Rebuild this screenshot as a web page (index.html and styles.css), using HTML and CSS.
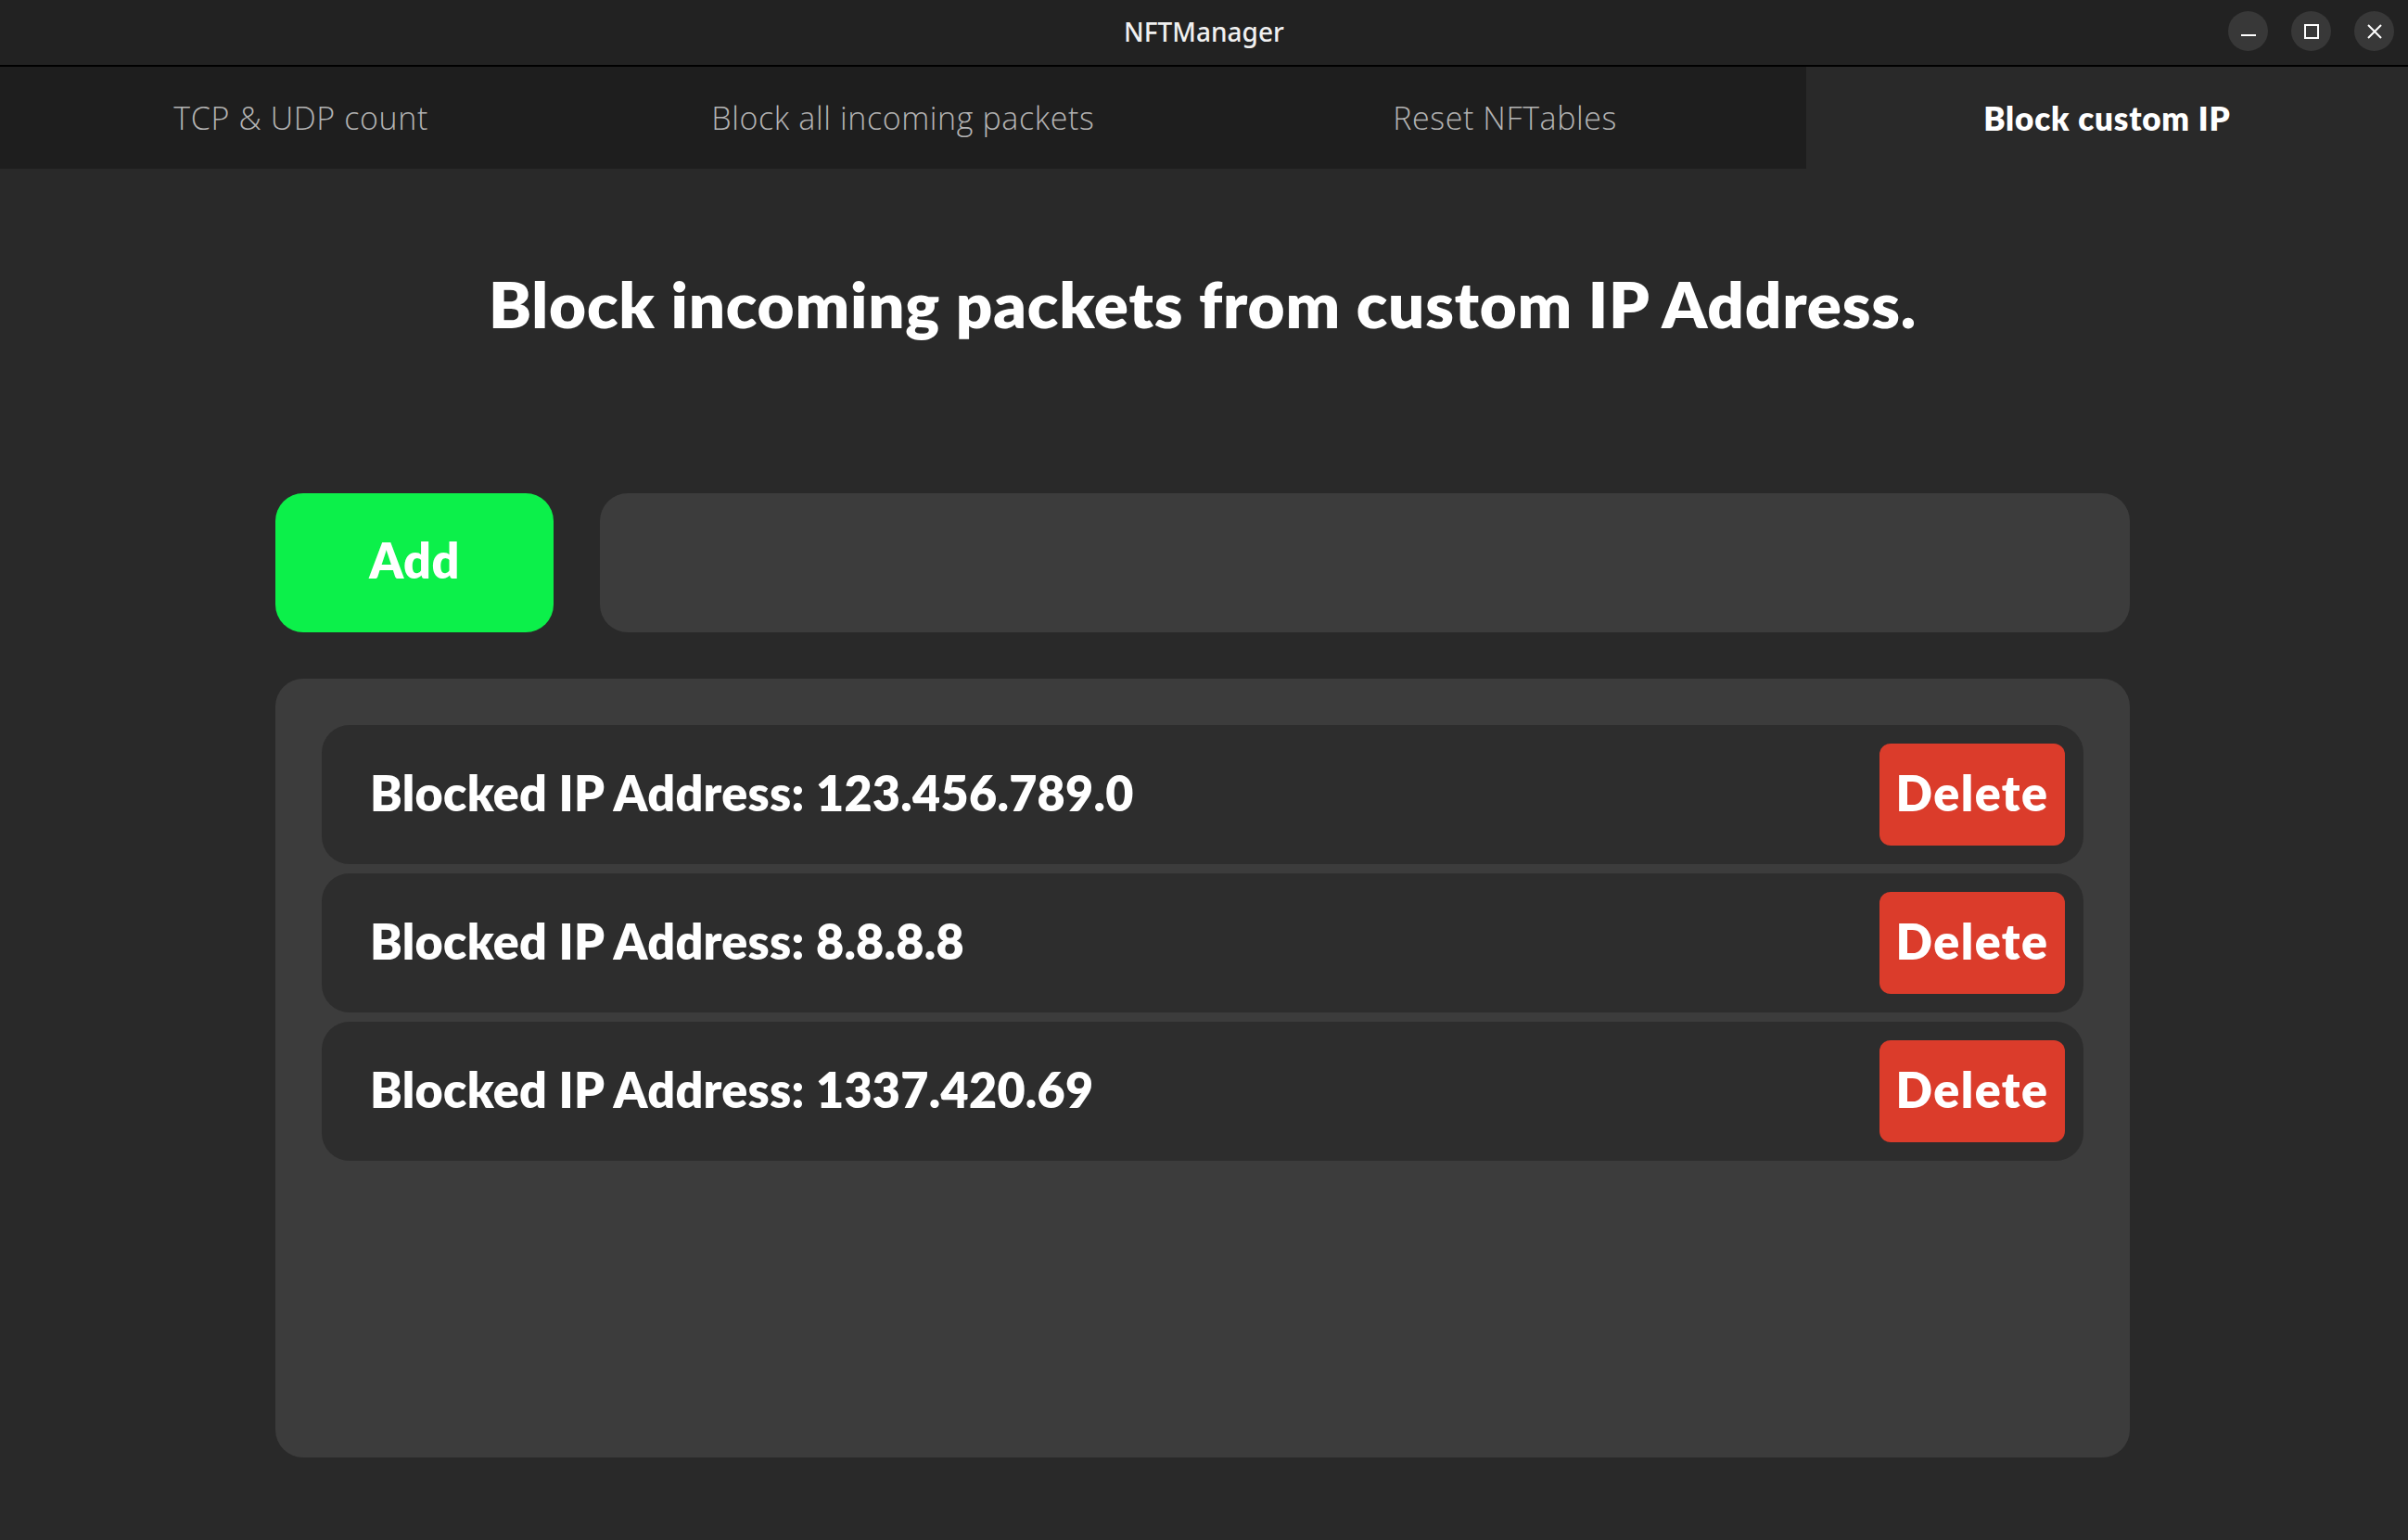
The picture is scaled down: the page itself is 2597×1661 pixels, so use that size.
FILE: index.html
```html
<!DOCTYPE html>
<html lang="en">
<head>
<meta charset="utf-8">
<title>NFTManager</title>
<link rel="stylesheet" href="styles.css">
</head>
<body>
<div class="window">
  <header class="titlebar">
    <div class="app-title">NFTManager</div>
    <div class="win-controls">
      <button class="win-btn" aria-label="Minimize">
        <svg width="18" height="18" viewBox="0 0 18 18"><rect x="1" y="12" width="16" height="2" fill="#fff"/></svg>
      </button>
      <button class="win-btn" aria-label="Maximize">
        <svg width="18" height="18" viewBox="0 0 18 18"><rect x="2" y="2" width="14" height="14" fill="none" stroke="#fff" stroke-width="2"/></svg>
      </button>
      <button class="win-btn" aria-label="Close">
        <svg width="18" height="18" viewBox="0 0 18 18"><path d="M2 2 L16 16 M16 2 L2 16" stroke="#fff" stroke-width="2"/></svg>
      </button>
    </div>
  </header>
  <nav class="tabs">
    <div class="tab">TCP &amp; UDP count</div>
    <div class="tab">Block all incoming packets</div>
    <div class="tab">Reset NFTables</div>
    <div class="tab tab-active">Block custom IP</div>
  </nav>
  <main class="content">
    <h1 class="heading">Block incoming packets from custom IP Address.</h1>
    <div class="add-row">
      <button class="add-btn">Add</button>
      <div class="ip-input"></div>
    </div>
    <section class="panel">
      <div class="ip-row"><span class="ip-text">Blocked IP Address: 123.456.789.0</span><button class="del-btn">Delete</button></div>
      <div class="ip-row"><span class="ip-text">Blocked IP Address: 8.8.8.8</span><button class="del-btn">Delete</button></div>
      <div class="ip-row"><span class="ip-text">Blocked IP Address: 1337.420.69</span><button class="del-btn">Delete</button></div>
    </section>
  </main>
</div>
</body>
</html>
```

FILE: styles.css
```css
* { box-sizing: border-box; }
html, body { margin: 0; padding: 0; background: #222222; }
body { font-family: Lato, "Open Sans", sans-serif; color: #fff; }

.window { display: flex; flex-direction: column; height: 100vh; }

.titlebar {
  height: 72px;
  flex: 0 0 72px;
  background: #222222;
  border-bottom: 2px solid #000;
  display: flex;
  align-items: center;
  justify-content: center;
  position: relative;
}
.app-title {
  font-family: "Noto Sans", sans-serif;
  font-size: 28px;
  font-weight: 500;
  color: #f0f0f0;
  padding-bottom: 2px;
}
.win-controls {
  position: absolute;
  right: 15px;
  top: 12px;
  display: flex;
  gap: 25px;
}
.win-btn {
  width: 43px; height: 43px;
  border-radius: 50%;
  border: 0;
  background: #383838;
  display: flex; align-items: center; justify-content: center;
  padding: 0;
}

.tabs {
  height: 110px;
  flex: 0 0 110px;
  display: grid;
  grid-template-columns: repeat(4, 1fr);
  background: #1e1e1e;
}
.tab {
  display: flex; align-items: center; justify-content: center;
  font-family: "Open Sans", sans-serif;
  font-size: 34px; font-weight: 300; color: #b4b4b4;
  letter-spacing: 0.6px;
}
.tab-active {
  background: #292929; color: #fff;
  font-family: Lato, sans-serif;
  font-weight: 800; font-size: 35px; letter-spacing: 0.8px;
}

.content {
  flex: 1;
  background: #292929;
  display: flex;
  flex-direction: column;
  align-items: center;
  padding: 96px 3px 0 0;
}
.heading {
  margin: 0;
  height: 100px;
  line-height: 100px;
  font-size: 69px;
  font-weight: 800;
  letter-spacing: 0.8px;
  color: #fff;
}
.add-row {
  width: 2000px;
  height: 150px;
  margin-top: 154px;
  display: flex;
  gap: 50px;
}
.add-btn {
  width: 300px;
  flex: 0 0 300px;
  border: 0;
  border-radius: 30px;
  background: #0cf04a;
  color: #fff;
  font-family: inherit;
  font-size: 52px;
  font-weight: 800;
  padding: 0 0 6px;
  letter-spacing: 0.5px;
}
.ip-input { flex: 1; background: #3c3c3c; border-radius: 30px; }

.panel {
  width: 2000px;
  height: 840px;
  margin-top: 50px;
  background: #3c3c3c;
  border-radius: 30px;
  padding: 50px;
  display: flex;
  flex-direction: column;
  gap: 10px;
}
.ip-row {
  height: 150px;
  flex: 0 0 150px;
  background: #2d2d2d;
  border-radius: 30px;
  display: flex;
  align-items: center;
  justify-content: space-between;
  padding: 0 20px 0 52px;
}
.ip-text { font-size: 52px; font-weight: 800; letter-spacing: 0.3px; color: #fff; padding-bottom: 4px; }
.del-btn {
  width: 200px; height: 110px;
  border: 0; border-radius: 12px;
  background: #db3c2b;
  color: #fff;
  font-family: inherit;
  font-size: 52px; font-weight: 800;
  padding: 0 0 4px;
  letter-spacing: 1.5px;
}
```
